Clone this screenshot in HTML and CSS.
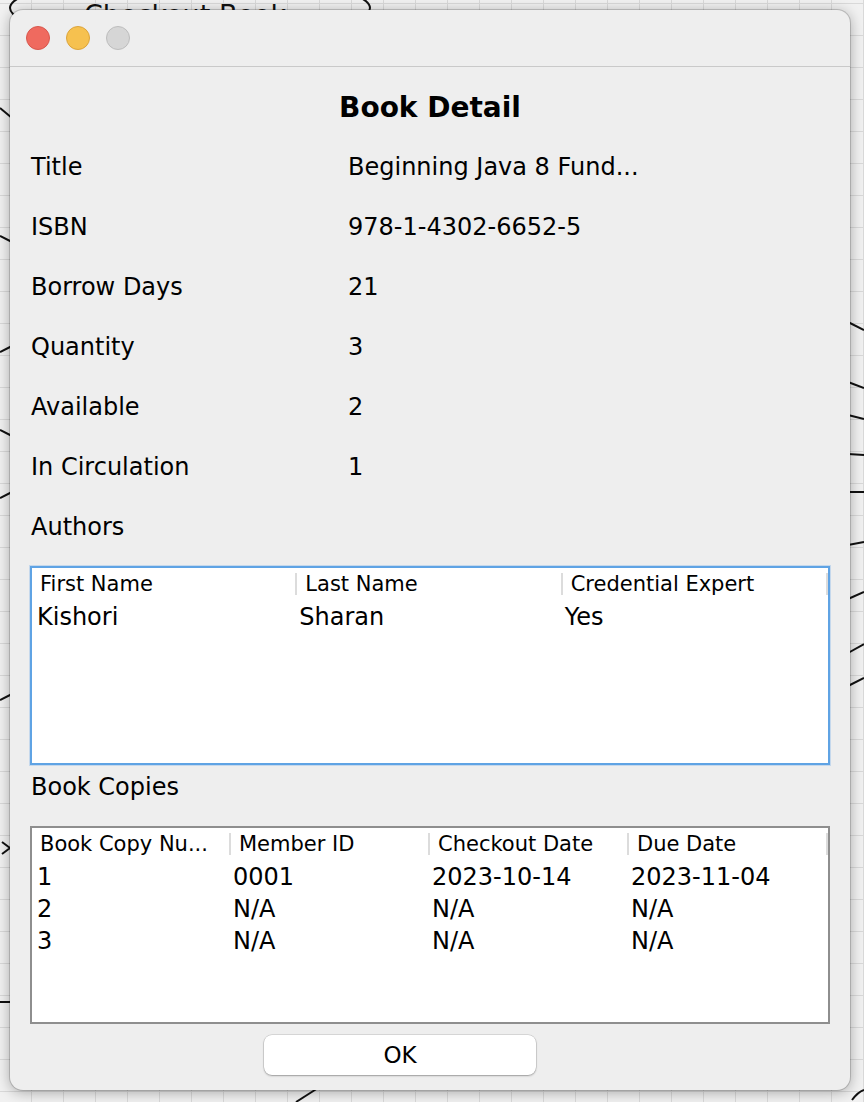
FILE: index.html
```html
<!DOCTYPE html>
<html lang="en">
<head>
<meta charset="utf-8">
<title>Book Detail</title>
<link rel="stylesheet" href="styles.css">
</head>
<body>
<div class="desktop">
  <svg class="backdrop" width="864" height="1102" viewBox="0 0 864 1102" xmlns="http://www.w3.org/2000/svg">
    <text x="84" y="24" class="backdrop-text">Checkout Book</text>
    <ellipse cx="190" cy="8" rx="180" ry="32" fill="none" stroke="#111" stroke-width="2"/>
    <g stroke="#111" stroke-width="2" fill="none">
      <path d="M0 108 L12 118"/>
      <path d="M0 236 L12 242"/>
      <path d="M0 352 L12 346"/>
      <path d="M0 430 L12 436"/>
      <path d="M0 498 L12 492"/>
      <path d="M0 700 L12 694"/>
      <path d="M2 842 L10 848 L2 854"/>
      <path d="M0 1002 L12 1002"/>
      <path d="M848 322 L864 330"/>
      <path d="M848 382 L864 388"/>
      <path d="M848 415 L864 419"/>
      <path d="M848 454 L864 455"/>
      <path d="M848 492 L864 492"/>
      <path d="M848 545 L864 542"/>
      <path d="M848 599 L864 592"/>
      <path d="M848 653 L864 644"/>
      <path d="M848 686 L864 678"/>
      <path d="M296 1102 L318 1088"/>
      <path d="M852 1100 Q858 1092 864 1090"/>
    </g>
  </svg>

  <div class="window">
    <div class="titlebar">
      <span class="light light-close"></span>
      <span class="light light-min"></span>
      <span class="light light-max"></span>
    </div>

    <div class="content">
      <h1 class="heading">Book Detail</h1>

      <div class="fields">
        <div class="field"><span class="label">Title</span><span class="value">Beginning Java 8 Fund...</span></div>
        <div class="field"><span class="label">ISBN</span><span class="value">978-1-4302-6652-5</span></div>
        <div class="field"><span class="label">Borrow Days</span><span class="value">21</span></div>
        <div class="field"><span class="label">Quantity</span><span class="value">3</span></div>
        <div class="field"><span class="label">Available</span><span class="value">2</span></div>
        <div class="field"><span class="label">In Circulation</span><span class="value">1</span></div>
      </div>

      <div class="section-label section-authors">Authors</div>
      <div class="table table-authors">
        <div class="thead cols-3">
          <div class="th"><span>First Name</span></div>
          <div class="th"><span>Last Name</span></div>
          <div class="th"><span>Credential Expert</span></div>
        </div>
        <div class="tr cols-3">
          <div class="td">Kishori</div>
          <div class="td">Sharan</div>
          <div class="td">Yes</div>
        </div>
      </div>

      <div class="section-label section-copies">Book Copies</div>
      <div class="table table-copies">
        <div class="thead cols-4">
          <div class="th"><span>Book Copy Nu...</span></div>
          <div class="th"><span>Member ID</span></div>
          <div class="th"><span>Checkout Date</span></div>
          <div class="th"><span>Due Date</span></div>
        </div>
        <div class="tr cols-4">
          <div class="td">1</div>
          <div class="td">0001</div>
          <div class="td">2023-10-14</div>
          <div class="td">2023-11-04</div>
        </div>
        <div class="tr cols-4">
          <div class="td">2</div>
          <div class="td">N/A</div>
          <div class="td">N/A</div>
          <div class="td">N/A</div>
        </div>
        <div class="tr cols-4">
          <div class="td">3</div>
          <div class="td">N/A</div>
          <div class="td">N/A</div>
          <div class="td">N/A</div>
        </div>
      </div>

      <div class="actions">
        <button class="btn" type="button">OK</button>
      </div>
    </div>
  </div>
</div>
</body>
</html>
```

FILE: styles.css
```css
html, body {
  margin: 0;
  padding: 0;
}

body {
  font-family: "DejaVu Sans", "Liberation Sans", sans-serif;
  color: #000;
  background-color: #f1f1f1;
  background-image:
    linear-gradient(#d9d9d9 1px, transparent 1px),
    linear-gradient(90deg, #d9d9d9 1px, transparent 1px);
  background-size: 32px 32px;
  background-position: 31px 3px;
}

.desktop {
  position: relative;
  width: 864px;
  height: 1102px;
  overflow: hidden;
  padding: 10px;
  box-sizing: border-box;
}

.backdrop {
  position: absolute;
  left: 0;
  top: 0;
}

.backdrop-text {
  font-family: "DejaVu Sans", sans-serif;
  font-size: 27px;
  fill: #111;
}

.window {
  position: relative;
  width: 840px;
  height: 1080px;
  background: #eeeeee;
  border-radius: 13px;
  box-shadow: 0 0 0 1px rgba(0, 0, 0, 0.16), 0 2px 14px rgba(0, 0, 0, 0.32);
  overflow: hidden;
}

.titlebar {
  height: 56px;
  border-bottom: 1px solid #c9c9c9;
  display: flex;
  align-items: center;
  gap: 16px;
  padding-left: 16px;
  box-sizing: content-box;
}

.light {
  width: 24px;
  height: 24px;
  border-radius: 50%;
  box-sizing: border-box;
  border: 1px solid;
}

.light-close {
  background: #ef6a5f;
  border-color: #d8574d;
}

.light-min {
  background: #f6c14f;
  border-color: #dca43b;
}

.light-max {
  background: #d6d6d6;
  border-color: #bdbdbd;
}

.content {
  padding: 0 20px 15px 20px;
}

.heading {
  margin: 0;
  padding: 23px 0 11px 0;
  height: 36px;
  line-height: 36px;
  font-size: 28px;
  font-weight: bold;
  text-align: center;
}

.fields {
  display: flex;
  flex-direction: column;
}

.field {
  display: flex;
  height: 60px;
  line-height: 60px;
  font-size: 24px;
  padding-left: 1px;
}

.label {
  width: 317px;
  flex: none;
}

.value {
  white-space: nowrap;
}

.section-label {
  font-size: 24px;
  height: 44px;
  line-height: 44px;
  padding-left: 1px;
}

.section-authors {
  margin-top: 8px;
  margin-bottom: 17px;
}

.section-copies {
  margin-bottom: 17px;
}

.table {
  width: 800px;
  box-sizing: border-box;
  background: #fff;
}

.table-authors {
  height: 199px;
  border: 2px solid #5fa3e4;
  box-shadow: 0 0 0 1px rgba(120, 176, 232, 0.35);
}

.table-copies {
  height: 198px;
  border: 2px solid #8e8e8e;
}

.thead,
.tr {
  display: grid;
}

.cols-3 {
  grid-template-columns: repeat(3, 1fr);
}

.cols-4 {
  grid-template-columns: repeat(4, 1fr);
}

.th {
  height: 33px;
  padding-top: 5px;
  box-sizing: border-box;
}

.th span {
  display: block;
  height: 22px;
  line-height: 22px;
  border-right: 2px solid #dcdcdc;
  padding-left: 8px;
  font-size: 21px;
  white-space: nowrap;
}

.td {
  height: 32px;
  line-height: 32px;
  font-size: 24px;
  padding-left: 2px;
  white-space: nowrap;
}

.td:first-child {
  padding-left: 5px;
}

.actions {
  display: flex;
  margin-top: 11px;
  padding-left: 234px;
}

.btn {
  width: 272px;
  height: 40px;
  border: none;
  border-radius: 8px;
  background: #ffffff;
  box-shadow: 0 0 0 0.5px rgba(0, 0, 0, 0.18), 0 1px 2px rgba(0, 0, 0, 0.28);
  font-family: "DejaVu Sans", "Liberation Sans", sans-serif;
  font-size: 23px;
  color: #000;
  padding: 0;
}
```
